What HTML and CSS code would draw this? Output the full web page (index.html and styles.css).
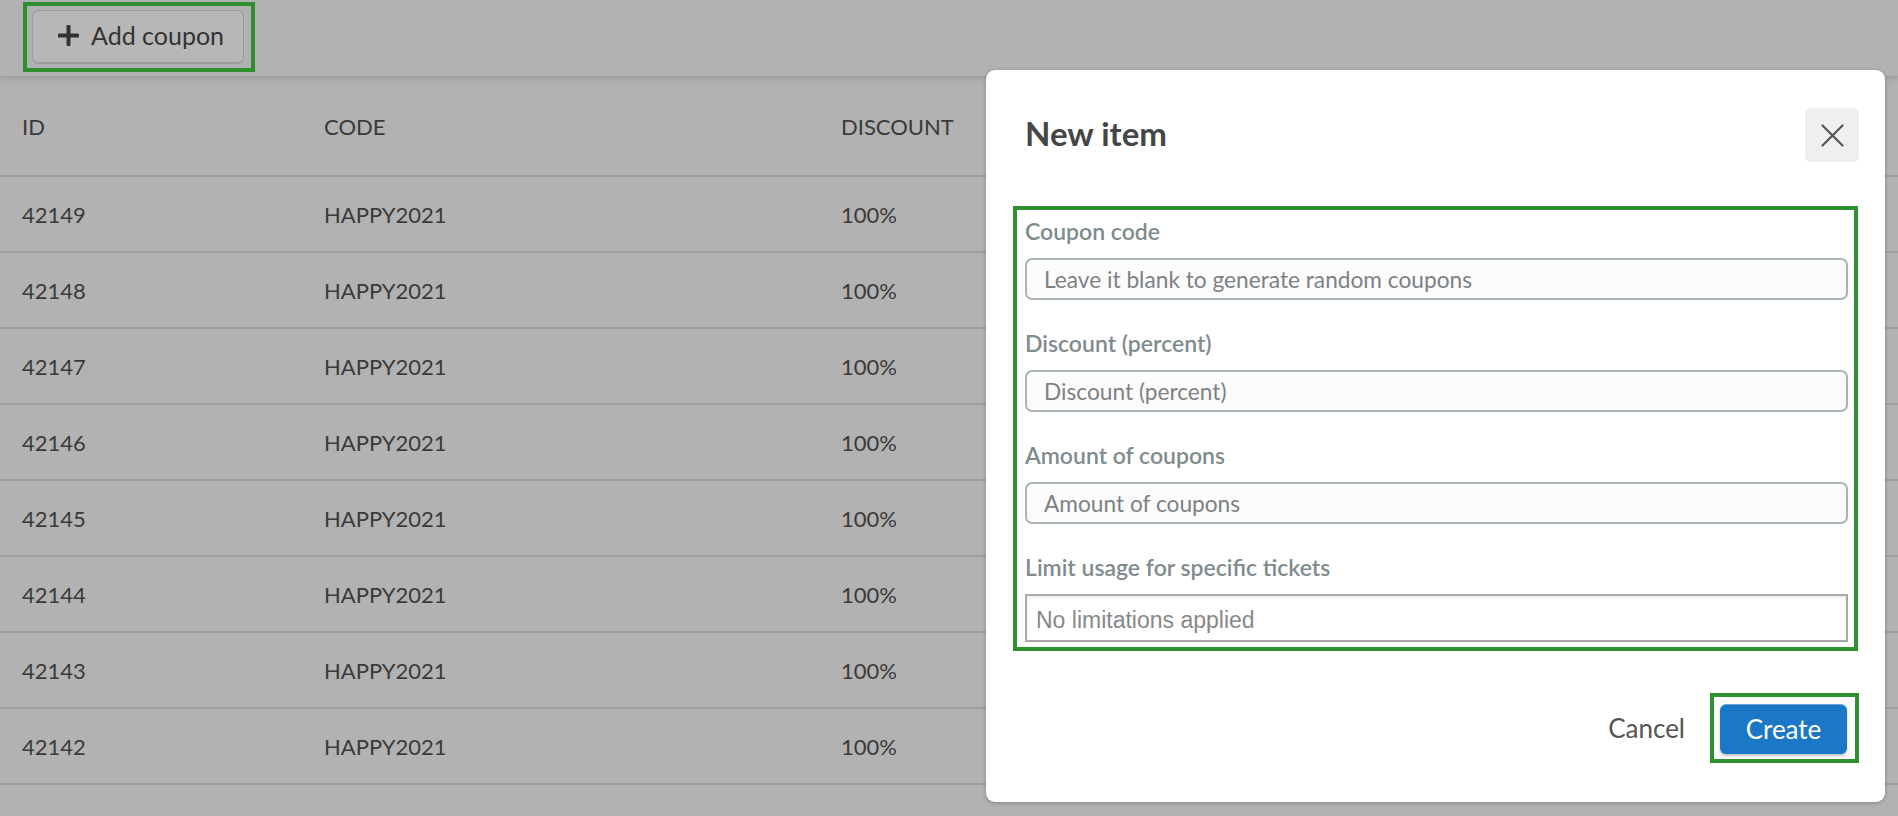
FILE: index.html
```html
<!DOCTYPE html>
<html>
<head>
<meta charset="utf-8">
<link rel="stylesheet" href="styles.css">
</head>
<body>
<div class="topbar">
  <div class="mark mark-add">
    <button class="btn-add">
      <svg class="plus" width="21" height="21" viewBox="0 0 21 21"><path d="M10.5 1.5v18M1.5 10.5h18" stroke="#333" stroke-width="4" stroke-linecap="round"/></svg>
      <span>Add coupon</span>
    </button>
  </div>
</div>
<table class="grid">
  <thead>
    <tr><th class="c-id">ID</th><th class="c-code">CODE</th><th>DISCOUNT</th></tr>
  </thead>
  <tbody>
    <tr><td>42149</td><td>HAPPY2021</td><td>100%</td></tr>
    <tr><td>42148</td><td>HAPPY2021</td><td>100%</td></tr>
    <tr><td>42147</td><td>HAPPY2021</td><td>100%</td></tr>
    <tr><td>42146</td><td>HAPPY2021</td><td>100%</td></tr>
    <tr><td>42145</td><td>HAPPY2021</td><td>100%</td></tr>
    <tr><td>42144</td><td>HAPPY2021</td><td>100%</td></tr>
    <tr><td>42143</td><td>HAPPY2021</td><td>100%</td></tr>
    <tr><td>42142</td><td>HAPPY2021</td><td>100%</td></tr>
  </tbody>
</table>

<div class="modal">
  <div class="modal-head">
    <h2 class="modal-title">New item</h2>
    <button class="btn-close" aria-label="Close">
      <svg width="23" height="23" viewBox="0 0 23 23"><path d="M1.5 1.5l20 20M21.5 1.5l-20 20" stroke="#555" stroke-width="2.2" stroke-linecap="round"/></svg>
    </button>
  </div>
  <div class="mark mark-form">
    <div class="field">
      <label class="lbl">Coupon code</label>
      <div class="inp">Leave it blank to generate random coupons</div>
    </div>
    <div class="field">
      <label class="lbl">Discount (percent)</label>
      <div class="inp">Discount (percent)</div>
    </div>
    <div class="field">
      <label class="lbl">Amount of coupons</label>
      <div class="inp">Amount of coupons</div>
    </div>
    <div class="field last">
      <label class="lbl">Limit usage for specific tickets</label>
      <div class="sel">No limitations applied</div>
    </div>
  </div>
  <div class="modal-foot">
    <span class="cancel">Cancel</span>
    <div class="mark mark-create">
      <button class="btn-create">Create</button>
    </div>
  </div>
</div>
</body>
</html>
```

FILE: styles.css
```css
html, body {
  margin: 0;
  padding: 0;
}
body {
  background: #b2b2b2;
  font-family: Lato, "Open Sans", "Liberation Sans", sans-serif;
  color: #3a3a3a;
  width: 1898px;
  height: 816px;
  overflow: hidden;
  position: relative;
}
.topbar {
  height: 77px;
  box-sizing: border-box;
  border-bottom: 1px solid #a2a2a2;
  box-shadow: 0 2px 6px rgba(0,0,0,0.12);
  display: flex;
  align-items: flex-start;
  padding-left: 23px;
  padding-top: 2px;
}
.mark {
  border: 4px solid #2d8f2d;
}
.mark-add {
  padding: 4px 7px 4px 5px;
}
.btn-add {
  display: flex;
  align-items: center;
  gap: 12px;
  height: 54px;
  width: 212px;
  padding: 0 0 3px 25px;
  box-sizing: border-box;
  background: #b7b7b7;
  border: 1px solid #9b9b9b;
  border-bottom-width: 2px;
  border-radius: 6px;
  font-family: Lato, sans-serif;
  font-size: 25px;
  color: #333;
}
.plus { flex: none; }

.grid {
  width: 100%;
  border-collapse: collapse;
  font-size: 22px;
}
.grid th {
  text-align: left;
  font-weight: 400;
  height: 98px;
  padding: 0 0 0 22px;
  border-bottom: 2px solid #9e9e9e;
  vertical-align: middle;
}
.grid td {
  height: 74px;
  padding: 0 0 0 22px;
  border-bottom: 2px solid #9e9e9e;
  vertical-align: middle;
}
.c-id { width: 280px; }
.c-code { width: 495px; }

.modal {
  position: absolute;
  left: 986px;
  top: 70px;
  width: 899px;
  box-sizing: border-box;
  background: #fff;
  border-radius: 9px;
  box-shadow: 0 1px 4px rgba(0,0,0,0.25);
  padding: 38px 26px 39px 27px;
}
.modal-head {
  display: flex;
  align-items: center;
  justify-content: space-between;
  height: 54px;
  padding-left: 12px;
}
.modal-title {
  margin: 0;
  padding-bottom: 4px;
  font-size: 33px;
  font-weight: 700;
  color: #464646;
}
.btn-close {
  width: 54px;
  height: 54px;
  border: none;
  border-radius: 6px;
  background: #efefef;
  display: flex;
  align-items: center;
  justify-content: center;
  padding: 0;
}
.mark-form {
  margin-top: 44px;
  margin-right: 1px;
  padding: 9px 6px 5px 8px;
}
.field {
  display: flex;
  flex-direction: column;
  margin-bottom: 31px;
}
.field.last { margin-bottom: 0; }
.lbl {
  font-size: 23px;
  line-height: 24px;
  font-weight: 600;
  color: #7f8c8d;
  margin-bottom: 15px;
}
.inp {
  height: 42px;
  box-sizing: border-box;
  border: 2px solid #aab4b7;
  border-radius: 7px;
  background: #fcfcfc;
  display: flex;
  align-items: center;
  padding-left: 17px;
  font-size: 22.7px;
  font-weight: 400;
  color: #7c8284;
}
.sel {
  height: 48px;
  box-sizing: border-box;
  border: 2px solid #a9a9a9;
  box-shadow: inset 0 2px 3px rgba(0,0,0,0.08);
  background: #fff;
  display: flex;
  align-items: center;
  padding-left: 9px;
  padding-top: 4px;
  font-family: "Liberation Sans", Arial, sans-serif;
  font-size: 23px;
  color: #888;
}
.modal-foot {
  margin-top: 42px;
  display: flex;
  justify-content: flex-end;
  align-items: center;
  gap: 25px;
}
.cancel {
  font-size: 26px;
  color: #555;
}
.mark-create {
  padding: 7px 8px 5px 6px;
}
.btn-create {
  width: 127px;
  height: 50px;
  border: none;
  border-radius: 6px;
  background: #1a78c6;
  box-shadow: inset 0 1px 0 rgba(255,255,255,0.35), 0 2px 3px rgba(0,0,0,0.25);
  color: #fff;
  font-family: Lato, sans-serif;
  font-size: 26px;
  padding: 0;
}
```
